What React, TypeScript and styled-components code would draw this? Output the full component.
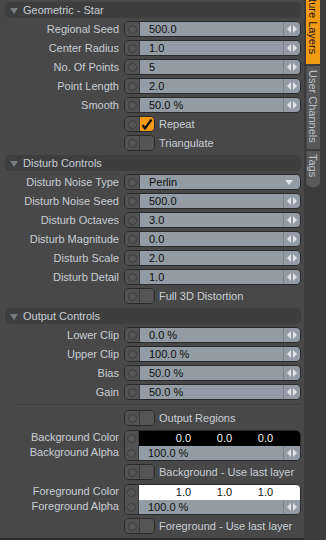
import React from 'react';
import styled, { createGlobalStyle } from 'styled-components';

const LABEL = '#c8ced4';
const VALUE_BG = '#939ca4';
const EDGE = '#2a2a2a';
const KNOB_BG = '#515151';
const ORANGE = '#f29a14';

const GlobalStyle = createGlobalStyle`
  html, body {
    margin: 0;
    padding: 0;
    background: #484848;
  }
  body {
    font-family: 'Liberation Sans', Arial, sans-serif;
    font-size: 11px;
  }
`;

const Shell = styled.div`
  display: flex;
  width: 326px;
  height: 540px;
  overflow: hidden;
  background: #484848;
`;

const Panel = styled.div`
  width: 304px;
  height: 540px;
  box-sizing: border-box;
  padding: 2px 0 0 5px;
  border-bottom: 2px solid #2c2c2c;
  display: flex;
  flex-direction: column;
`;

const Section = styled.section<{ $gap?: number }>`
  display: flex;
  flex-direction: column;
  gap: ${({ $gap }) => $gap ?? 3}px;
  margin-bottom: 4px;
`;

const Header = styled.div`
  width: 296px;
  height: 16px;
  box-sizing: border-box;
  border-radius: 5px;
  background: #3e3e3e;
  display: flex;
  align-items: center;
  gap: 5px;
  padding-left: 5px;
  color: ${LABEL};
  line-height: 16px;
`;

const Caret = styled.span`
  width: 0;
  height: 0;
  border-left: 4px solid transparent;
  border-right: 4px solid transparent;
  border-top: 6px solid #777c80;
  margin-top: 1px;
`;

const Row = styled.div`
  display: grid;
  grid-template-columns: 114px 177px;
  column-gap: 5px;
  align-items: center;
  min-height: 16px;
`;

const Label = styled.div`
  text-align: right;
  color: ${LABEL};
  white-space: nowrap;
  line-height: 15px;
`;

const LabelStack = styled.div`
  display: flex;
  flex-direction: column;
`;

const Field = styled.div`
  display: flex;
  height: 16px;
  box-sizing: border-box;
  border: 1px solid ${EDGE};
  border-radius: 5px;
  overflow: hidden;
`;

const Knob = styled.div`
  width: 14px;
  flex: none;
  background: ${KNOB_BG};
  border-right: 1px solid #3a3a3a;
  display: flex;
  flex-direction: column;
  align-items: center;
  justify-content: space-around;
`;

const Dot = styled.span`
  width: 9px;
  height: 9px;
  box-sizing: border-box;
  border-radius: 50%;
  border: 1px solid #3d3d3d;
  background: #555555;
`;

const Value = styled.div<{ $split?: boolean }>`
  flex: 1;
  display: flex;
  align-items: center;
  justify-content: ${({ $split }) => ($split ? 'space-between' : 'flex-start')};
  padding-left: 9px;
  background: ${VALUE_BG};
  color: #0e0e0e;
  white-space: nowrap;
  line-height: 14px;
`;

const Spinner = styled.div`
  width: 16px;
  flex: none;
  background: ${VALUE_BG};
  border-left: 1px solid #7b848c;
  display: flex;
  align-items: center;
  justify-content: center;
`;

const DropArrow = styled.span`
  width: 0;
  height: 0;
  margin-right: 7px;
  border-left: 4px solid transparent;
  border-right: 4px solid transparent;
  border-top: 5px solid #e2e6e9;
`;

const ToggleLine = styled.div`
  display: flex;
  align-items: center;
  gap: 4px;
  color: ${LABEL};
  white-space: nowrap;
`;

const Toggle = styled.div`
  width: 31px;
  height: 16px;
  box-sizing: border-box;
  display: flex;
  border: 1px solid ${EDGE};
  border-radius: 5px;
  overflow: hidden;
`;

const ToggleBox = styled.div<{ $on?: boolean }>`
  flex: 1;
  background: ${({ $on }) => ($on ? ORANGE : '#555555')};
  display: flex;
  align-items: center;
  justify-content: center;
`;

const Separator = styled.div`
  margin: 0 0 4px 11px;
  width: 285px;
  height: 1px;
  background: #3a3a3a;
  border-bottom: 1px solid #4f4f4f;
`;

const ColorField = styled.div`
  display: grid;
  grid-template-columns: 14px 1fr;
  grid-template-rows: 15px 15px;
  height: 31px;
  box-sizing: border-box;
  border: 1px solid ${EDGE};
  border-radius: 5px;
  overflow: hidden;
`;

const ColorKnob = styled(Knob)`
  grid-row: 1 / span 2;
  width: auto;
`;

const Swatch = styled.div<{ $bg: string; $fg: string }>`
  display: flex;
  align-items: center;
  padding-left: 24px;
  background: ${({ $bg }) => $bg};
  color: ${({ $fg }) => $fg};
`;

const Channel = styled.span`
  width: 41px;
  text-align: center;
`;

const AlphaRow = styled.div`
  display: flex;
`;

const TabStrip = styled.div`
  flex: 1;
  height: 540px;
  background: #3b3b3b;
  padding-left: 2px;
  overflow: hidden;
`;

const TabColumn = styled.div`
  width: 14px;
  display: flex;
  flex-direction: column;
  margin-top: -18px;
`;

const Tab = styled.div<{ $active?: boolean; $last?: boolean }>`
  writing-mode: vertical-rl;
  line-height: 14px;
  white-space: nowrap;
  padding: ${({ $active, $last }) => ($active ? '0 0 10px' : $last ? '3px 0 10px' : '4px 0 6px')};
  margin-top: ${({ $active }) => ($active ? '0' : '2px')};
  background: ${({ $active }) => ($active ? ORANGE : '#585858')};
  color: ${({ $active }) => ($active ? '#1c1408' : '#b9c0c6')};
  border-radius: ${({ $last }) => ($last ? '0 0 5px 5px' : '0')};
  box-shadow: ${({ $active }) => ($active ? 'none' : 'inset 1px 0 0 #4a4a4a')};
`;

const SpinIcon = () => (
  <svg width="10" height="8" viewBox="0 0 10 8">
    <polygon points="0,4 4,0 4,8" fill="#e1e5e8" />
    <polygon points="6,0 10,4 6,8" fill="#e1e5e8" />
    <rect x="4.6" y="0" width="0.8" height="8" fill="#8a939b" />
  </svg>
);

const CheckMark = () => (
  <svg width="12" height="12" viewBox="0 0 12 12">
    <path d="M1.5 7 L4 10.5 L10.5 1.5" stroke="#111" strokeWidth="2.2" fill="none" />
  </svg>
);

type NumProps = { label: string; value: string };

const NumberRow = ({ label, value }: NumProps) => (
  <Row>
    <Label>{label}</Label>
    <Field>
      <Knob>
        <Dot />
      </Knob>
      <Value>{value}</Value>
      <Spinner>
        <SpinIcon />
      </Spinner>
    </Field>
  </Row>
);

const DropdownRow = ({ label, value }: NumProps) => (
  <Row>
    <Label>{label}</Label>
    <Field>
      <Knob>
        <Dot />
      </Knob>
      <Value $split>
        {value}
        <DropArrow />
      </Value>
    </Field>
  </Row>
);

const ToggleRow = ({ label, on = false }: { label: string; on?: boolean }) => (
  <Row>
    <span />
    <ToggleLine>
      <Toggle>
        <Knob>
          <Dot />
        </Knob>
        <ToggleBox $on={on}>{on && <CheckMark />}</ToggleBox>
      </Toggle>
      {label}
    </ToggleLine>
  </Row>
);

type ColorProps = { name: string; bg: string; fg: string; channel: string };

const ColorGroup = ({ name, bg, fg, channel }: ColorProps) => (
  <Row>
    <LabelStack>
      <Label>{name} Color</Label>
      <Label>{name} Alpha</Label>
    </LabelStack>
    <ColorField>
      <ColorKnob>
        <Dot />
        <Dot />
      </ColorKnob>
      <Swatch $bg={bg} $fg={fg}>
        <Channel>{channel}</Channel>
        <Channel>{channel}</Channel>
        <Channel>{channel}</Channel>
      </Swatch>
      <AlphaRow>
        <Value>100.0 %</Value>
        <Spinner>
          <SpinIcon />
        </Spinner>
      </AlphaRow>
    </ColorField>
  </Row>
);

const SectionHeader = ({ title }: { title: string }) => (
  <Header>
    <Caret />
    {title}
  </Header>
);

export default function App() {
  return (
    <>
      <GlobalStyle />
      <Shell>
        <Panel>
          <Section>
            <SectionHeader title="Geometric - Star" />
            <NumberRow label="Regional Seed" value="500.0" />
            <NumberRow label="Center Radius" value="1.0" />
            <NumberRow label="No. Of Points" value="5" />
            <NumberRow label="Point Length" value="2.0" />
            <NumberRow label="Smooth" value="50.0 %" />
            <ToggleRow label="Repeat" on />
            <ToggleRow label="Triangulate" />
          </Section>
          <Section>
            <SectionHeader title="Disturb Controls" />
            <DropdownRow label="Disturb Noise Type" value="Perlin" />
            <NumberRow label="Disturb Noise Seed" value="500.0" />
            <NumberRow label="Disturb Octaves" value="3.0" />
            <NumberRow label="Disturb Magnitude" value="0.0" />
            <NumberRow label="Disturb Scale" value="2.0" />
            <NumberRow label="Disturb Detail" value="1.0" />
            <ToggleRow label="Full 3D Distortion" />
          </Section>
          <Section>
            <SectionHeader title="Output Controls" />
            <NumberRow label="Lower Clip" value="0.0 %" />
            <NumberRow label="Upper Clip" value="100.0 %" />
            <NumberRow label="Bias" value="50.0 %" />
            <NumberRow label="Gain" value="50.0 %" />
          </Section>
          <Separator />
          <Section $gap={3.5}>
            <ToggleRow label="Output Regions" />
            <ColorGroup name="Background" bg="#000000" fg="#f2f2f2" channel="0.0" />
            <ToggleRow label="Background - Use last layer" />
            <ColorGroup name="Foreground" bg="#ffffff" fg="#111111" channel="1.0" />
            <ToggleRow label="Foreground - Use last layer" />
          </Section>
        </Panel>
        <TabStrip>
          <TabColumn>
            <Tab $active>Texture Layers</Tab>
            <Tab>User Channels</Tab>
            <Tab $last>Tags</Tab>
          </TabColumn>
        </TabStrip>
      </Shell>
    </>
  );
}
